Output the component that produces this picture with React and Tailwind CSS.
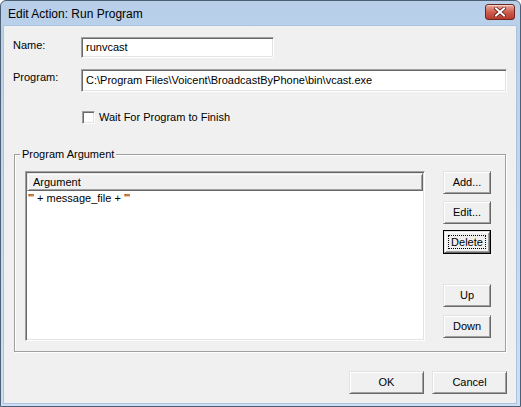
import React from 'react';

const sunken =
  'border border-t-[#a0a0a0] border-l-[#a0a0a0] border-r-white border-b-white shadow-[inset_1px_1px_0_#696969,inset_-1px_-1px_0_#e3e3e3]';
const raised =
  'border border-t-[#e3e3e3] border-l-[#e3e3e3] border-r-[#696969] border-b-[#696969] shadow-[inset_1px_1px_0_#ffffff,inset_-1px_-1px_0_#a0a0a0]';

function Button({ children, className = '', isDefault = false }) {
  if (isDefault) {
    return (
      <div className={`border border-black ${className}`}>
        <div className={`${raised} h-full w-full bg-[#f0f0f0] p-[3px] flex`}>
          <div className="flex-1 flex items-center justify-center border border-dotted border-black">
            {children}
          </div>
        </div>
      </div>
    );
  }
  return (
    <div className={`${raised} bg-[#f0f0f0] flex items-center justify-center ${className}`}>
      {children}
    </div>
  );
}

function CloseButton() {
  return (
    <div className="mt-[3px] mr-[5px] w-[30px] h-[16px] rounded-[3px] border border-[#6b2420] bg-gradient-to-b from-[#e8a99d] via-[#cf5e50] to-[#b9392c] shadow-[inset_0_1px_0_rgba(255,255,255,0.5)] flex items-center justify-center">
      <svg width="12" height="10" viewBox="0 0 12 10">
        <path d="M2 1.5 L10 8.5 M10 1.5 L2 8.5" stroke="#5a1a16" strokeWidth="3.6" strokeLinecap="square" />
        <path d="M2 1.5 L10 8.5 M10 1.5 L2 8.5" stroke="#ffffff" strokeWidth="2" strokeLinecap="square" />
      </svg>
    </div>
  );
}

export default function App() {
  return (
    <div className="w-[521px] h-[407px] flex flex-col rounded-t-[6px] border border-[#4d5f74] bg-gradient-to-b from-[#b8cfe9] via-[#c4d8ee] to-[#cddff3] font-['Liberation_Sans',Arial,sans-serif] text-[11px] text-black leading-[13px] overflow-hidden">
      {/* Title bar */}
      <div className="h-[24px] flex items-start shrink-0">
        <span className="pl-[7px] pt-[6px] text-[12px] leading-[14px] text-black">Edit Action: Run Program</span>
        <div className="ml-auto">
          <CloseButton />
        </div>
      </div>

      {/* Client area */}
      <div className="flex-1 ml-[2px] mr-[3px] mb-[2px] bg-[#f0f0f0] border border-[#a9c3e0] flex flex-col pt-[11px]">
        {/* Name */}
        <div className="flex items-start h-[21px]">
          <span className="pl-[9px] w-[77px] pt-[2px]">Name:</span>
          <div className={`${sunken} w-[193px] h-[21px] bg-white flex items-center pl-[4px]`}>runvcast</div>
        </div>

        {/* Program */}
        <div className="flex items-start h-[23px] mt-[11px]">
          <span className="pl-[9px] w-[77px] pt-[2px]">Program:</span>
          <div className={`${sunken} w-[426px] h-[23px] bg-white flex items-center pl-[4px]`}>
            C:\Program Files\Voicent\BroadcastByPhone\bin\vcast.exe
          </div>
        </div>

        {/* Wait checkbox */}
        <div className="flex items-center h-[13px] mt-[19px] pl-[78px]">
          <div className={`${sunken} w-[13px] h-[13px] bg-white`} />
          <span className="ml-[4px]">Wait For Program to Finish</span>
        </div>

        {/* Program Argument group */}
        <div className="relative mt-[30px] mx-[10px] h-[198px] border border-[#a0a0a0] shadow-[inset_1px_1px_0_#ffffff,1px_1px_0_#ffffff] flex pl-[10px] pt-[16px]">
          <span className="absolute -top-[7px] left-[5px] px-[2px] bg-[#f0f0f0]">Program Argument</span>

          {/* Argument list */}
          <div className={`${sunken} w-[400px] h-[170px] bg-white p-[1px] flex flex-col`}>
            <div className={`${raised} h-[18px] bg-[#f0f0f0] flex items-center pl-[5px]`}>Argument</div>
            <div className="pl-[1px] pt-[1px]">'" + message_file + '"</div>
          </div>

          {/* Side buttons */}
          <div className="ml-[18px] flex flex-col">
            <Button className="w-[48px] h-[23px]">Add...</Button>
            <Button className="w-[48px] h-[23px] mt-[7px]">Edit...</Button>
            <Button className="w-[48px] h-[24px] mt-[6px]" isDefault>Delete</Button>
            <Button className="w-[48px] h-[23px] mt-[30px]">Up</Button>
            <Button className="w-[48px] h-[23px] mt-[8px]">Down</Button>
          </div>
        </div>

        {/* OK / Cancel */}
        <div className="flex justify-end gap-[8px] mt-[19px] pr-[9px]">
          <Button className="w-[75px] h-[23px]">OK</Button>
          <Button className="w-[75px] h-[23px]">Cancel</Button>
        </div>
      </div>
    </div>
  );
}
